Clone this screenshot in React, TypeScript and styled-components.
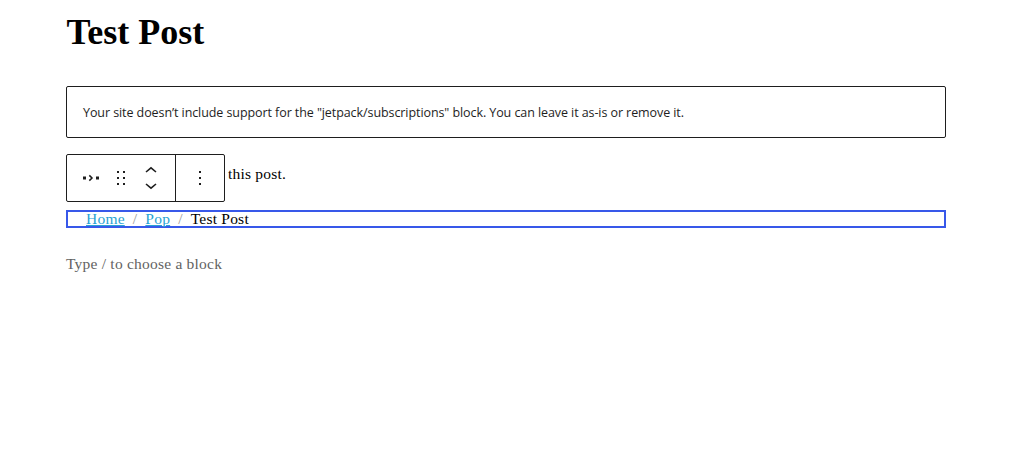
import styled, { createGlobalStyle } from "styled-components";

const GlobalStyle = createGlobalStyle`
  body {
    margin: 0;
    background: #fff;
    color: #000;
    font-family: "Liberation Serif", "Times New Roman", serif;
    font-size: 15.5px;
    letter-spacing: 0.22px;
  }
`;

const Editor = styled.main`
  width: 880px;
  padding: 12px 0 0 66px;
`;

const Title = styled.h1`
  margin: 0;
  height: 74px;
  padding-left: 0.5px;
  font-size: 36px;
  line-height: 41px;
  letter-spacing: 0;
  white-space: nowrap;
`;

const Warning = styled.div`
  display: flex;
  align-items: center;
  box-sizing: border-box;
  height: 52px;
  padding: 2px 16px 0;
  border: 1px solid #1e1e1e;
  border-radius: 2px;
`;

const WarningText = styled.p`
  margin: 0;
  color: #1e1e1e;
  font-family: "Open Sans", "Noto Sans", sans-serif;
  font-size: 12.5px;
  line-height: 18px;
  letter-spacing: -0.08px;
  white-space: nowrap;
`;

const ParagraphRow = styled.div`
  display: flex;
  gap: 3px;
  margin-top: 16px;
`;

const Paragraph = styled.p`
  margin: 11px 0 0;
  line-height: 18px;
`;

const Toolbar = styled.div`
  display: flex;
  box-sizing: border-box;
  width: 159px;
  height: 48px;
  border: 1px solid #1e1e1e;
  border-radius: 2px;
  color: #1e1e1e;
`;

const ToolbarGroup = styled.div<{ $width: number }>`
  display: flex;
  align-items: center;
  box-sizing: border-box;
  width: ${({ $width }) => $width}px;

  & + & {
    border-left: 1px solid #1e1e1e;
  }
`;

const ToolbarButton = styled.button<{ $width: number }>`
  display: flex;
  align-items: center;
  justify-content: center;
  width: ${({ $width }) => $width}px;
  height: 46px;
  padding: 0;
  border: 0;
  background: none;
  color: inherit;
`;

const Movers = styled.div`
  display: flex;
  flex-direction: column;
  align-items: center;
  gap: 10px;
  width: 30px;
  margin-left: 9px;
`;

const Mover = styled.button`
  display: flex;
  padding: 0;
  border: 0;
  background: none;
  color: inherit;
`;

const Breadcrumbs = styled.nav`
  display: flex;
  align-items: center;
  box-sizing: border-box;
  height: 18px;
  margin-top: 8px;
  padding-left: 18px;
  border: 2px solid #3858e9;
  line-height: 14px;
  white-space: nowrap;
`;

const Crumb = styled.a`
  color: #29a3d4;
  text-decoration: underline;
`;

const Separator = styled.span`
  width: 20.6px;
  color: #999;
  text-align: center;
`;

const Placeholder = styled.p`
  margin: 27px 0 0;
  color: #626262;
  line-height: 18px;
`;

const BreadcrumbIcon = () => (
  <svg width="18" height="10" viewBox="0 0 18 10">
    <path d="M1 3.5h3v3H1zM14 3.5h3v3h-3z" fill="currentColor" />
    <path d="M7.3 2.4 10 5 7.3 7.6" fill="none" stroke="currentColor" strokeWidth="1.5" />
  </svg>
);

const DragIcon = () => (
  <svg width="8" height="14" viewBox="0 0 8 14" fill="currentColor">
    <path d="M0 0h2v2H0zM6 0h2v2H6zM0 6h2v2H0zM6 6h2v2H6zM0 12h2v2H0zM6 12h2v2H6z" />
  </svg>
);

const ChevronIcon = ({ down = false }: { down?: boolean }) => (
  <svg width="12" height="7" viewBox="0 0 12 7">
    <path
      d={down ? "M1 1 6 5.2 11 1" : "M1 6 6 1.8 11 6"}
      fill="none"
      stroke="currentColor"
      strokeWidth="1.6"
    />
  </svg>
);

const MoreIcon = () => (
  <svg width="2" height="14" viewBox="0 0 2 14" fill="currentColor">
    <path d="M0 0h2v2H0zM0 6h2v2H0zM0 12h2v2H0z" />
  </svg>
);

export default function App() {
  return (
    <>
      <GlobalStyle />
      <Editor>
        <Title>Test Post</Title>
        <Warning>
          <WarningText>
            Your site doesn’t include support for the "jetpack/subscriptions"
            block. You can leave it as-is or remove it.
          </WarningText>
        </Warning>
        <ParagraphRow>
          <Toolbar>
            <ToolbarGroup $width={108}>
              <ToolbarButton $width={48} aria-label="Breadcrumbs">
                <BreadcrumbIcon />
              </ToolbarButton>
              <ToolbarButton $width={12} aria-label="Drag">
                <DragIcon />
              </ToolbarButton>
              <Movers>
                <Mover aria-label="Move up">
                  <ChevronIcon />
                </Mover>
                <Mover aria-label="Move down">
                  <ChevronIcon down />
                </Mover>
              </Movers>
            </ToolbarGroup>
            <ToolbarGroup $width={49}>
              <ToolbarButton $width={48} aria-label="Options">
                <MoreIcon />
              </ToolbarButton>
            </ToolbarGroup>
          </Toolbar>
          <Paragraph>this post.</Paragraph>
        </ParagraphRow>
        <Breadcrumbs>
          <Crumb>Home</Crumb>
          <Separator>/</Separator>
          <Crumb>Pop</Crumb>
          <Separator>/</Separator>
          <span>Test Post</span>
        </Breadcrumbs>
        <Placeholder>Type / to choose a block</Placeholder>
      </Editor>
    </>
  );
}
